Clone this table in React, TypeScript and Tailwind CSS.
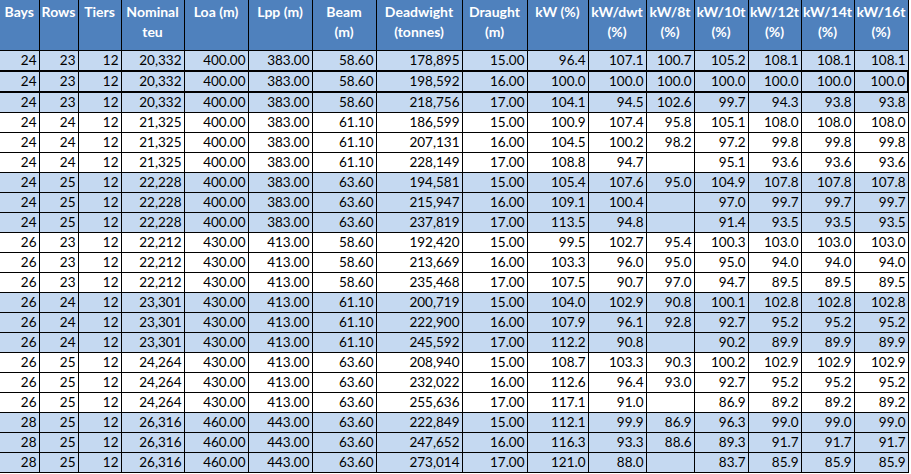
const HEADERS: string[][] = [
  ['Bays'],
  ['Rows'],
  ['Tiers'],
  ['Nominal', 'teu'],
  ['Loa (m)'],
  ['Lpp (m)'],
  ['Beam', '(m)'],
  ['Deadwight', '(tonnes)'],
  ['Draught', '(m)'],
  ['kW (%)'],
  ['kW/dwt', '(%)'],
  ['kW/8t', '(%)'],
  ['kW/10t', '(%)'],
  ['kW/12t', '(%)'],
  ['kW/14t', '(%)'],
  ['kW/16t', '(%)'],
];

const WIDTHS = [39, 39, 43, 63, 64, 64, 64, 86, 65, 61, 58, 48, 54, 53, 53, 54];

const ROWS: string[][] = [
  ['24', '23', '12', '20,332', '400.00', '383.00', '58.60', '178,895', '15.00', '96.4', '107.1', '100.7', '105.2', '108.1', '108.1', '108.1'],
  ['24', '23', '12', '20,332', '400.00', '383.00', '58.60', '198,592', '16.00', '100.0', '100.0', '100.0', '100.0', '100.0', '100.0', '100.0'],
  ['24', '23', '12', '20,332', '400.00', '383.00', '58.60', '218,756', '17.00', '104.1', '94.5', '102.6', '99.7', '94.3', '93.8', '93.8'],
  ['24', '24', '12', '21,325', '400.00', '383.00', '61.10', '186,599', '15.00', '100.9', '107.4', '95.8', '105.1', '108.0', '108.0', '108.0'],
  ['24', '24', '12', '21,325', '400.00', '383.00', '61.10', '207,131', '16.00', '104.5', '100.2', '98.2', '97.2', '99.8', '99.8', '99.8'],
  ['24', '24', '12', '21,325', '400.00', '383.00', '61.10', '228,149', '17.00', '108.8', '94.7', '', '95.1', '93.6', '93.6', '93.6'],
  ['24', '25', '12', '22,228', '400.00', '383.00', '63.60', '194,581', '15.00', '105.4', '107.6', '95.0', '104.9', '107.8', '107.8', '107.8'],
  ['24', '25', '12', '22,228', '400.00', '383.00', '63.60', '215,947', '16.00', '109.1', '100.4', '', '97.0', '99.7', '99.7', '99.7'],
  ['24', '25', '12', '22,228', '400.00', '383.00', '63.60', '237,819', '17.00', '113.5', '94.8', '', '91.4', '93.5', '93.5', '93.5'],
  ['26', '23', '12', '22,212', '430.00', '413.00', '58.60', '192,420', '15.00', '99.5', '102.7', '95.4', '100.3', '103.0', '103.0', '103.0'],
  ['26', '23', '12', '22,212', '430.00', '413.00', '58.60', '213,669', '16.00', '103.3', '96.0', '95.0', '95.0', '94.0', '94.0', '94.0'],
  ['26', '23', '12', '22,212', '430.00', '413.00', '58.60', '235,468', '17.00', '107.5', '90.7', '97.0', '94.7', '89.5', '89.5', '89.5'],
  ['26', '24', '12', '23,301', '430.00', '413.00', '61.10', '200,719', '15.00', '104.0', '102.9', '90.8', '100.1', '102.8', '102.8', '102.8'],
  ['26', '24', '12', '23,301', '430.00', '413.00', '61.10', '222,900', '16.00', '107.9', '96.1', '92.8', '92.7', '95.2', '95.2', '95.2'],
  ['26', '24', '12', '23,301', '430.00', '413.00', '61.10', '245,592', '17.00', '112.2', '90.8', '', '90.2', '89.9', '89.9', '89.9'],
  ['26', '25', '12', '24,264', '430.00', '413.00', '63.60', '208,940', '15.00', '108.7', '103.3', '90.3', '100.2', '102.9', '102.9', '102.9'],
  ['26', '25', '12', '24,264', '430.00', '413.00', '63.60', '232,022', '16.00', '112.6', '96.4', '93.0', '92.7', '95.2', '95.2', '95.2'],
  ['26', '25', '12', '24,264', '430.00', '413.00', '63.60', '255,636', '17.00', '117.1', '91.0', '', '86.9', '89.2', '89.2', '89.2'],
  ['28', '25', '12', '26,316', '460.00', '443.00', '63.60', '222,849', '15.00', '112.1', '99.9', '86.9', '96.3', '99.0', '99.0', '99.0'],
  ['28', '25', '12', '26,316', '460.00', '443.00', '63.60', '247,652', '16.00', '116.3', '93.3', '88.6', '89.3', '91.7', '91.7', '91.7'],
  ['28', '25', '12', '26,316', '460.00', '443.00', '63.60', '273,014', '17.00', '121.0', '88.0', '', '83.7', '85.9', '85.9', '85.9'],
];

export default function App() {
  return (
    <div className="bg-white w-[911px] h-[474px] overflow-hidden font-['Lato',sans-serif] text-[13.5px]">
      <table className="table-fixed border-collapse w-[908px]">
        <colgroup>
          {WIDTHS.map((w, i) => (
            <col key={i} style={{ width: w }} />
          ))}
        </colgroup>
        <thead>
          <tr>
            {HEADERS.map((lines, i) => (
              <th
                key={i}
                className={`h-[50px] bg-[#4f81bd] text-white text-[14px] font-bold align-top text-center pt-[2px] px-0 leading-[20px] border-x border-black ${i === 0 ? 'border-l-0' : ''}`}
              >
                {lines.map((l, j) => (
                  <div key={j} className="whitespace-nowrap">{l}</div>
                ))}
              </th>
            ))}
          </tr>
        </thead>
        <tbody>
          {ROWS.map((row, r) => {
            const shaded = Math.floor(r / 3) % 2 === 0;
            const thickBottom = r === 0 || r === 1;
            return (
              <tr key={r} className={shaded ? 'bg-[#c5d9f1]' : 'bg-white'}>
                {row.map((v, c) => (
                  <td
                    key={c}
                    className={`h-[20px] p-0 pr-[2px] text-right text-black leading-[19px] border border-black ${c === 0 ? 'border-l-0' : ''} ${thickBottom ? 'border-b-2' : ''} ${r === 1 && c === 15 ? 'border-r-2' : ''}`}
                  >
                    {v}
                  </td>
                ))}
              </tr>
            );
          })}
        </tbody>
      </table>
    </div>
  );
}
